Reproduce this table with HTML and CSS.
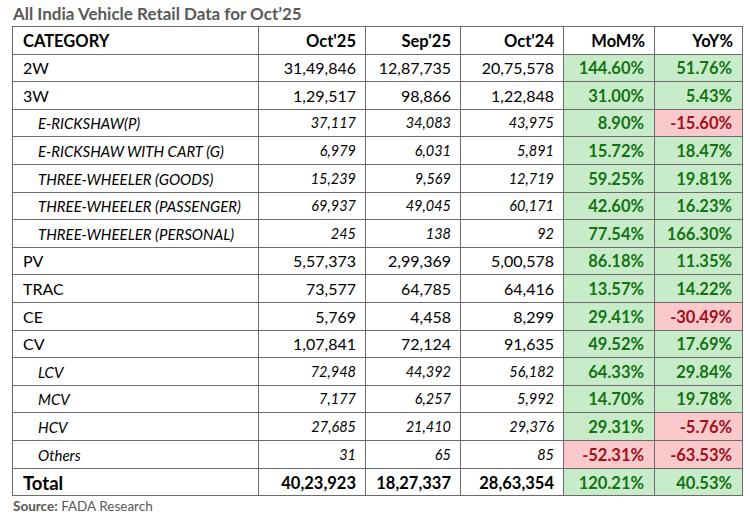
FILE: index.html
```html
<!DOCTYPE html>
<html>
<head>
<meta charset="utf-8">
<link rel="stylesheet" href="styles.css">
</head>
<body>
<div class="wrap">
  <div class="title">All India Vehicle Retail Data for Oct’25</div>
  <table class="data">
    <colgroup>
      <col class="c1"><col class="c2"><col class="c3"><col class="c4"><col class="c5"><col class="c6">
    </colgroup>
    <tr class="head"><td class="cat">CATEGORY</td><td>Oct'25</td><td>Sep'25</td><td>Oct'24</td><td>MoM%</td><td>YoY%</td></tr>
    <tr class="main"><td class="cat">2W</td><td>31,49,846</td><td>12,87,735</td><td>20,75,578</td><td class="pos">144.60%</td><td class="pos">51.76%</td></tr>
    <tr class="main"><td class="cat">3W</td><td>1,29,517</td><td>98,866</td><td>1,22,848</td><td class="pos">31.00%</td><td class="pos">5.43%</td></tr>
    <tr class="sub"><td class="cat">E-RICKSHAW(P)</td><td>37,117</td><td>34,083</td><td>43,975</td><td class="pos">8.90%</td><td class="neg">-15.60%</td></tr>
    <tr class="sub"><td class="cat">E-RICKSHAW WITH CART (G)</td><td>6,979</td><td>6,031</td><td>5,891</td><td class="pos">15.72%</td><td class="pos">18.47%</td></tr>
    <tr class="sub"><td class="cat">THREE-WHEELER (GOODS)</td><td>15,239</td><td>9,569</td><td>12,719</td><td class="pos">59.25%</td><td class="pos">19.81%</td></tr>
    <tr class="sub"><td class="cat">THREE-WHEELER (PASSENGER)</td><td>69,937</td><td>49,045</td><td>60,171</td><td class="pos">42.60%</td><td class="pos">16.23%</td></tr>
    <tr class="sub"><td class="cat">THREE-WHEELER (PERSONAL)</td><td>245</td><td>138</td><td>92</td><td class="pos">77.54%</td><td class="pos">166.30%</td></tr>
    <tr class="main"><td class="cat">PV</td><td>5,57,373</td><td>2,99,369</td><td>5,00,578</td><td class="pos">86.18%</td><td class="pos">11.35%</td></tr>
    <tr class="main"><td class="cat">TRAC</td><td>73,577</td><td>64,785</td><td>64,416</td><td class="pos">13.57%</td><td class="pos">14.22%</td></tr>
    <tr class="main"><td class="cat">CE</td><td>5,769</td><td>4,458</td><td>8,299</td><td class="pos">29.41%</td><td class="neg">-30.49%</td></tr>
    <tr class="main"><td class="cat">CV</td><td>1,07,841</td><td>72,124</td><td>91,635</td><td class="pos">49.52%</td><td class="pos">17.69%</td></tr>
    <tr class="sub"><td class="cat">LCV</td><td>72,948</td><td>44,392</td><td>56,182</td><td class="pos">64.33%</td><td class="pos">29.84%</td></tr>
    <tr class="sub"><td class="cat">MCV</td><td>7,177</td><td>6,257</td><td>5,992</td><td class="pos">14.70%</td><td class="pos">19.78%</td></tr>
    <tr class="sub"><td class="cat">HCV</td><td>27,685</td><td>21,410</td><td>29,376</td><td class="pos">29.31%</td><td class="neg">-5.76%</td></tr>
    <tr class="sub"><td class="cat">Others</td><td>31</td><td>65</td><td>85</td><td class="neg">-52.31%</td><td class="neg">-63.53%</td></tr>
    <tr class="total"><td class="cat">Total</td><td>40,23,923</td><td>18,27,337</td><td>28,63,354</td><td class="pos">120.21%</td><td class="pos">40.53%</td></tr>
  </table>
  <div class="source"><span class="src-label">Source:</span> FADA Research</div>
</div>
</body>
</html>
```

FILE: styles.css
```css
html, body {
  margin: 0;
  padding: 0;
  background: #ffffff;
}

.wrap {
  padding-left: 12px;
  font-family: Lato, "Open Sans", "Liberation Sans", sans-serif;
  color: #000;
}

.title {
  height: 26px;
  line-height: 24px;
  padding-left: 1px;
  font-size: 17px;
  font-weight: 700;
  color: #595959;
  box-sizing: border-box;
  padding-top: 2px;
}

.data {
  border-collapse: collapse;
  table-layout: fixed;
  width: 730px;
  border: 1px solid #3f3f3f;
}

.c1 { width: 246px; }
.c2 { width: 107px; }
.c3 { width: 95px; }
.c4 { width: 103px; }
.c5 { width: 91px; }
.c6 { width: 88px; }

.data tr {
  height: 27.6px;
}

.data td {
  border: 1px solid #6b6b6b;
  padding: 0 9px 4px 0;
  text-align: right;
  vertical-align: bottom;
  line-height: 18px;
  font-size: 16px;
  white-space: nowrap;
  overflow: hidden;
}

.data td.cat {
  text-align: left;
  padding-left: 10px;
}

.head td {
  font-weight: 700;
  font-size: 16.5px;
}

.sub td {
  font-style: italic;
  font-size: 14.5px;
  padding-bottom: 4px;
}

.sub td.cat {
  font-size: 15px;
  padding-left: 25px;
}

.total td {
  font-weight: 700;
  font-size: 16.5px;
  padding-bottom: 3px;
}

.total td.cat {
  font-size: 18.5px;
}

.data td.pos,
.data td.neg {
  font-weight: 700;
  font-style: normal;
  font-size: 16.5px;
  padding-right: 10px;
}

.data td.pos {
  background: #c8ecc9;
  color: #137313;
}

.data td.neg {
  background: #f9c9cc;
  color: #a0101a;
}

.source {
  padding-left: 1px;
  padding-top: 2px;
  font-size: 13.5px;
  line-height: 16px;
  color: #595959;
}

.src-label {
  font-weight: 700;
}
```
